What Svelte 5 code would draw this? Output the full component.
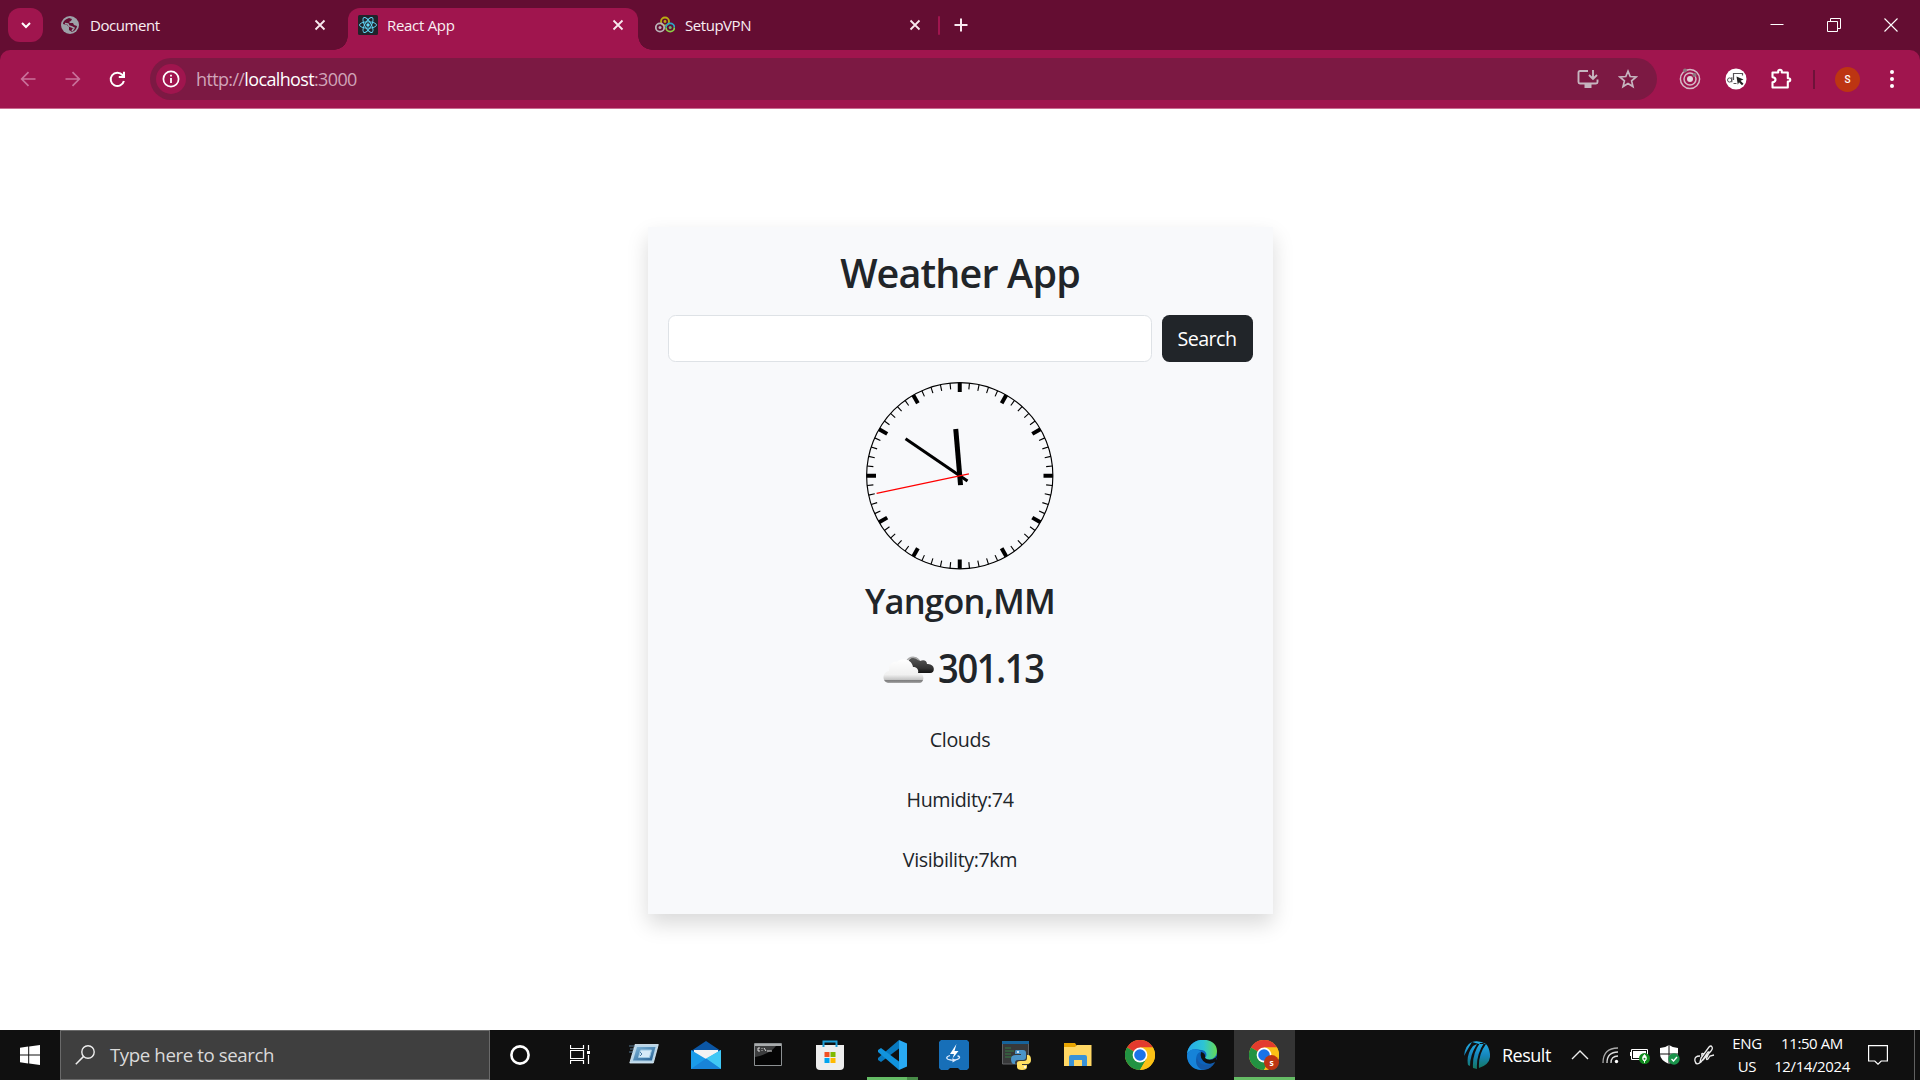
<script>
  // Clock marks: every fifth one is a thick hour mark.
  const marks = Array.from({ length: 60 }, (_, i) => ({ angle: i * 6, hour: i % 5 === 0 }));
  const tabs = [
    { title: 'Document', icon: 'globe' },
    { title: 'React App', icon: 'react', active: true },
    { title: 'SetupVPN', icon: 'vpn' }
  ];
  const apps = ['run', 'mail', 'cmd', 'store', 'code', 'bolt', 'python', 'folder', 'chrome', 'edge', 'profile'];
  const details = ['Clouds', 'Humidity:74', 'Visibility:7km'];
</script>

{#snippet chrome()}
  <circle cx="15" cy="15" r="15" fill="#fbc116" />
  <path d="M15 15 2 7.5A15 15 0 0 1 28 7.5H15z" fill="#e33b2e" />
  <path d="M2 7.5A15 15 0 0 0 15 30L21.5 18.8 15 15z" fill="#229342" />
  <path d="M15 7.5H28A15 15 0 0 1 15 30l6.5-11.2z" fill="#fbc116" />
  <circle cx="15" cy="15" r="7.4" fill="#fff" />
  <circle cx="15" cy="15" r="5.8" fill="#1a73e8" />
{/snippet}

<div class="screen">
  <div class="tabstrip">
    <div class="tab-search">
      <svg width="12" height="12" viewBox="0 0 12 12"><path d="m2 4 4 4 4-4" fill="none" stroke="#fff" stroke-width="2" /></svg>
    </div>
    {#each tabs as tab}
      <div class="tab {tab.icon}" class:active={tab.active}>
        <svg width="20" height="20" viewBox="0 0 20 20">
          {#if tab.icon === 'globe'}
            <circle cx="10" cy="10" r="9" fill="#9da1a8" />
            <path d="M9 3C6 4 3 6 3 9l4 1 2 2v3l3 2c3-1 5-4 5-6l-3-1-1-2h-3L9 7l2-1 1-2z" fill="#640d32" />
            <path d="M5 8.500l3 .5 1 2 3 1 2 1-2 3" fill="none" stroke="#9da1a8" stroke-width="1.500" />
          {:else if tab.icon === 'react'}
            <rect width="20" height="20" rx="1.500" fill="#20232a" />
            <g fill="none" stroke="#61dafb" stroke-width=".9">
              <ellipse cx="10" cy="10" rx="8.500" ry="3.200" />
              <ellipse cx="10" cy="10" rx="8.500" ry="3.200" transform="rotate(60 10 10)" />
              <ellipse cx="10" cy="10" rx="8.500" ry="3.200" transform="rotate(120 10 10)" />
            </g>
            <circle cx="10" cy="10" r="1.700" fill="#61dafb" />
          {:else}
            <g fill="none" stroke-width="1.800">
              <circle cx="10" cy="6.500" r="4" stroke="#b9ac12" />
              <path d="M11 12.500a4.200 4.200 0 0 1 8.400 0" stroke="#29a6c9" />
              <path d="M11 12.500a4.200 4.200 0 0 0 8.400 0" stroke="#8ccf45" />
              <circle cx="5" cy="12.500" r="4.200" stroke="#b9b2b8" />
            </g>
            <circle cx="10" cy="6.500" r="1.400" fill="#b9ac12" />
            <circle cx="5" cy="12.500" r="1.500" fill="#b9b2b8" />
            <circle cx="15.200" cy="12.500" r="1.500" fill="#66ba70" />
          {/if}
        </svg>
        <span class="tab-title">{tab.title}</span>
        <svg width="12" height="12" viewBox="0 0 12 12"><path d="m1.500 1.500 9 9m0-9-9 9" stroke="#f8e9ef" stroke-width="1.800" /></svg>
      </div>
    {/each}
    <span class="tab-divider"></span>
    <svg class="new-tab" width="14" height="14" viewBox="0 0 14 14"><path d="M7 .5v13M.5 7h13" stroke="#f8e9ef" stroke-width="2" /></svg>
    <div class="window-buttons">
      <svg width="14" height="14" viewBox="0 0 14 14"><path d="M.5 6.500h13" stroke="#fff" /></svg>
      <svg width="14" height="14" viewBox="0 0 14 14"><path d="M.5 3.500h10v10H.5zM3.500 3.500v-3h10v10h-3" fill="none" stroke="#fff" /></svg>
      <svg width="14" height="14" viewBox="0 0 14 14"><path d="m.5.500 13 13m0-13-13 13" stroke="#fff" stroke-width="1.100" /></svg>
    </div>
  </div>

  <div class="toolbar-back">
    <div class="toolbar">
      <svg class="back" width="16" height="16" viewBox="0 0 16 16"><path d="M15.500 8H2m6.500-6.800L1.700 8l6.800 6.800" fill="none" stroke="#c9719a" stroke-width="1.700" /></svg>
      <svg class="forward" width="16" height="16" viewBox="0 0 16 16"><path d="M.5 8H14M7.500 1.200 14.300 8l-6.800 6.800" fill="none" stroke="#c9719a" stroke-width="1.700" /></svg>
      <svg class="reload" width="17" height="17" viewBox="0 0 17 17"><path d="M14.900 10A6.700 6.700 0 1 1 13.500 4l2 2" fill="none" stroke="#fff" stroke-width="2" /><path d="M16 .8V7h-6.200V5H14V.8z" fill="#fff" /></svg>
      <div class="address">
        <span class="info">
          <svg width="18" height="18" viewBox="0 0 18 18"><circle cx="9" cy="9" r="7.600" fill="none" stroke="#fff" stroke-width="1.700" /><path d="M9 8v5M9 4.700v1.900" stroke="#fff" stroke-width="1.800" /></svg>
        </span>
        <span class="url">http://<b>localhost</b>:3000</span>
        <svg class="install" width="22" height="20" viewBox="0 0 22 20"><path d="M11 2H3q-1.500 0-1.500 1.500V13q0 1.500 1.500 1.500h16q1.500 0 1.500-1.500v-2.500M16 1v9m-4-4 4 4 4-4" fill="none" stroke="#c6b5bf" stroke-width="1.900" /><path d="M7.500 14.500h7V19h-7z" fill="#c6b5bf" /></svg>
        <svg width="20" height="20" viewBox="0 0 20 20"><path d="m10 2.200 2.200 5.300 5.900.5-4.500 3.900 1.400 5.700-5-3-5 3 1.400-5.700L1.900 8l5.900-.5z" fill="none" stroke="#c6b5bf" stroke-width="1.700" /></svg>
      </div>
      <svg class="ext" width="22" height="22" viewBox="0 0 22 22"><g fill="none" stroke="#d6b9c6" stroke-width="1.500"><circle cx="11" cy="11" r="9.600" /><circle cx="11" cy="11" r="6" /></g><circle cx="11" cy="11" r="3" fill="#e3d6dc" /><circle cx="6" cy="2.500" r="2" fill="#8d7880" /><circle cx="15.500" cy="7" r="2" fill="#8d7880" /></svg>
      <svg class="ext2" width="22" height="22" viewBox="0 0 22 22"><circle cx="11" cy="11" r="10.500" fill="#fff" /><path d="M17.500 7.500v-2h-9V12m0 3.500h3M6.800 9.300v5" fill="none" stroke="#575457" stroke-width="1.200" /><circle cx="4.600" cy="12" r="2.100" fill="none" stroke="#575457" /><path d="m11.500 8.500 7 3-3 1.200 3 3-1.500 1.500-3-3-1.200 2.500z" fill="#222" /></svg>
      <svg class="puzzle" width="22" height="22" viewBox="0 0 22 22"><path d="M2.500 4.500h5.700v-1a1.800 1.800 0 0 1 3.600 0v1h6v5.700h.8a1.600 1.600 0 0 1 0 3.300h-.8v6H2.500v-5.200c4-.8 4-4.500 0-5.200z" fill="none" stroke="#fff" stroke-width="2.100" stroke-linejoin="round" /></svg>
      <span class="divider"></span>
      <span class="avatar">S</span>
      <svg width="6" height="20" viewBox="0 0 6 20"><g fill="#fff"><circle cx="3" cy="3" r="2" /><circle cx="3" cy="10" r="2" /><circle cx="3" cy="17" r="2" /></g></svg>
    </div>
  </div>

  <main>
    <section class="card">
      <h1>Weather App</h1>
      <form>
        <input type="text" aria-label="City" />
        <button type="button">Search</button>
      </form>
      <svg class="clock" viewBox="-75 -75 150 150">
        <circle r="74.500" fill="none" stroke="#000" stroke-width=".9" />
        {#each marks as mark}
          <path d={mark.hour ? 'M0-74.500v7.500' : 'M0-74.500v5'} transform="rotate({mark.angle})" stroke="#000" stroke-width={mark.hour ? 3.2 : 0.9} />
        {/each}
        <path d="M0 7.500v-45" transform="rotate(-4.900)" stroke="#000" stroke-width="4" />
        <path d="M0 7.500v-60" transform="rotate(-55.700)" stroke="#000" stroke-width="2.400" />
        <path d="M0 7.500v-75.500" transform="rotate(258)" stroke="#f00" stroke-width=".95" />
      </svg>
      <h2>Yangon,MM</h2>
      <div class="temperature">
        <svg width="54" height="30" viewBox="0 0 54 30">
          <defs>
            <linearGradient id="white-cloud" x2="0" y2="1"><stop stop-color="#fff" /><stop offset=".65" stop-color="#f0f0f0" /><stop offset=".86" stop-color="#c4c4c4" /><stop offset=".9" stop-color="#777" /><stop offset="1" stop-color="#aaa" /></linearGradient>
            <linearGradient id="dark-cloud" x2="0" y2="1"><stop stop-color="#5a5a5a" /><stop offset=".7" stop-color="#333" /><stop offset="1" stop-color="#111" /></linearGradient>
          </defs>
          <path d="M26 9c0-8 9-9 12-3 4-2 7 0 7 3 8-1 9 9 3 9H34z" fill="url(#dark-cloud)" />
          <path d="M24 9c1-7 8-9 13-4" fill="none" stroke="#aaa" stroke-width="1.500" />
          <path d="M8 28C-1 28 0 17 7 16 6 8 12 6 15 7c4-5 15-3 16 5 4 0 6 3 5 6 7-1 7 10 1 10z" fill="url(#white-cloud)" />
        </svg>
        <span>301.13</span>
      </div>
      {#each details as text}
        <p>{text}</p>
      {/each}
    </section>
  </main>

  <footer>
    <div class="start"><svg width="20" height="20" viewBox="0 0 20 20"><path d="M0 2.700 8.200 1.600v7.900H0zM9.200 1.400 20 0v9.500H9.200zM0 10.500h8.200v7.900L0 17.300zM9.200 10.500H20V20L9.200 18.600z" fill="#fff" /></svg></div>
    <div class="search">
      <svg width="20" height="20" viewBox="0 0 20 20"><circle cx="13" cy="7" r="6.200" fill="none" stroke="#eee" stroke-width="1.400" /><path d="M8.600 11.400.8 19.300" stroke="#eee" stroke-width="1.500" /></svg>
      <span>Type here to search</span>
    </div>
    <div class="system-button"><svg width="20" height="20" viewBox="0 0 20 20"><circle cx="10" cy="10" r="8.600" fill="none" stroke="#fff" stroke-width="2.600" /></svg></div>
    <div class="system-button"><svg width="20" height="20" viewBox="0 0 20 20"><path d="M.5 0v3.500h13V0M.5 5.500h13v8H.5zM.5 19v-3.500h13V19M18.500 0v5M18.500 10v9" fill="none" stroke="#fff" stroke-width="1.200" /><path d="M17 6h3v3h-3z" fill="#fff" /></svg></div>
    <div class="apps">
      {#each apps as app}
        <div class="app {app}">
          <svg width="30" height="30" viewBox="0 0 30 30">
            {#if app === 'run'}
              <defs><linearGradient id="run-face" x2="1" y2="1"><stop stop-color="#7db4d8" /><stop offset="1" stop-color="#245f92" /></linearGradient></defs>
              <path d="M6 4.500h23.300l-5 18.500H.8z" fill="#b7d5e8" stroke="#e0f0fa" stroke-width=".8" /><path d="M8 7h18.500l-3.600 13.500H4z" fill="url(#run-face)" /><path d="M11.500 10h11l-2 7.500h-11z" fill="#d5eaf8" stroke="#9cc7e2" /><path d="m11 12 2 2-2 2" fill="none" stroke="#4b7da5" /><path d="M0 6h6M1 9h4M0 12h4" stroke="#54758c" />
            {:else if app === 'mail'}
              <path d="M0 11 15 1l15 10-15 9z" fill="#0b56a4" /><path d="M3 10h24v9H3z" fill="#f3f3f3" /><path d="M0 10l15 9 15-9v19H0z" fill="#1a9be9" /><path d="m15 18.500 15-8.500v19z" fill="#40c8f5" /><path d="M0 29 15 18.500 30 29z" fill="#1883d8" />
            {:else if app === 'cmd'}
              <path d="M1.500 3.500h27v22h-27z" fill="#050505" stroke="#8c9092" /><path d="M2 4h26v2H2z" fill="#a9acad" /><path d="M2 6h21Q17 14 2 17z" fill="#3c3d3e" /><path d="M7 8H5v3h2M9 8v.8M9 10v.8M11 8l2 3M14 11h5" stroke="#ddd" stroke-width="1" fill="none" />
            {:else if app === 'store'}
              <path d="M8.500 7V1.500h13V7" fill="none" stroke="#1e9fd8" stroke-width="2" /><path d="M1 5h28v21q0 4-4 4H5q-4 0-4-4z" fill="#eee" /><path d="M8.500 7V5m13 2V5" stroke="#1e9fd8" stroke-width="2" /><path d="M9.500 12h5v5h-5z" fill="#f25022" /><path d="M15.500 12h5v5h-5z" fill="#7fba00" /><path d="M9.500 18h5v5h-5z" fill="#00a4ef" /><path d="M15.500 18h5v5h-5z" fill="#ffb900" />
            {:else if app === 'code'}
              <path d="m22 0 8 3.500v23L22 30z" fill="#29a9f2" /><path d="M22 0v8.500L4 22l-3-2 0-2z" fill="#0879bf" /><path d="M22 30v-8.500L4 8l-3 2v2z" fill="#1193dd" />
            {:else if app === 'bolt'}
              <path d="M2 0h26l2 2v26l-2 2h-7l-2-2h-8l-2 2H2l-2-2V2z" fill="#176fb8" /><path d="m17.500 4-6.500 10h4l-1.500 4.500L19.500 11h-4z" fill="#fff" /><path d="M11 15.500c-5 1.500-4 4 1 4.500 5 .300 9-1 8.500-3q-.5-1-2-1" stroke="#dceafd" stroke-width="1.300" fill="none" /><path d="M13.500 18v4.500l3.500-2z" fill="#dceafd" />
            {:else if app === 'python'}
              <path d="M1.500 2h26v22h-26z" fill="#38393a" stroke="#626466" /><path d="M1 1h27v3H1z" fill="#16639b" /><path d="M4 8h6M4 11h9M4 14h6M4 17h7" stroke="#357e44" />
              <path d="M15 10h7q3 0 3 3v4q0 3-3 3h-5q-3 0-3 3v1h-1q-3 0-3-5 0-4 5-4h5v-1h-6v-2q0-2 1-2z" fill="#4b94c8" /><path d="M26 15h1q3 0 3 5 0 4-4 4h-5v1h5v2q0 3-5 3t-5-3v-4q0-2 3-2h4q3 0 3-3z" fill="#ffdf63" /><circle cx="17" cy="12" r="1" fill="#fff" /><circle cx="24" cy="27" r="1" fill="#fff" />
            {:else if app === 'folder'}
              <path d="M1 3h11l2 3h13v6H1z" fill="#e8a400" /><path d="M1 7h11l2-2h14.500v21H1z" fill="#ffd764" /><path d="M6 26V17q0-2 2-2h14q2 0 2 2v9h-5v-6h-8v6z" fill="#3992d8" />
            {:else if app === 'edge'}
              <defs><linearGradient id="edge-top"><stop stop-color="#26a9eb" /><stop offset=".55" stop-color="#2dc4d5" /><stop offset="1" stop-color="#65da55" /></linearGradient></defs>
              <circle cx="15" cy="15" r="15" fill="#0c63bb" /><path d="M0 14C2-5 30-4 30 11c0 9-10 10-12 7 3-3 1-8-4-8C7 8 2 10 0 14z" fill="url(#edge-top)" /><path d="M0 15c3-8 11-6 14-3-6 0-8 14 4 18C6 31 0 24 0 15z" fill="#1683d8" /><path d="M14 12q5 1 4 6 3 3 9 1l3 1-1 2q-5 3-10 1-7-4-5-11z" fill="#101010" /><path d="M28 21.500q-5 10-14 8-7-5-4-12 1 7 9 7.500 5 0 9-3.500z" fill="#1459a8" /><path d="m30 17-2 4.500-2 1V19q3-1 4-3z" fill="#101010" />
            {:else}
              {@render chrome()}
              {#if app === 'profile'}<circle cx="22.500" cy="22.500" r="7.500" fill="#bd3512" /><text x="22.500" y="25.500" font-size="8.500" font-weight="700" text-anchor="middle" fill="#fff">s</text>{/if}
            {/if}
          </svg>
        </div>
      {/each}
    </div>
    <div class="tray">
      <svg class="ball" width="26" height="28" viewBox="0 0 26 28"><defs><linearGradient id="ball" x2="0" y2="1"><stop stop-color="#24b1e8" /><stop offset=".5" stop-color="#1686bd" /><stop offset="1" stop-color="#14775e" /></linearGradient></defs><path d="M8 1Q1 4 0 15q5-9 8-14zM9 5Q2 14 4 24l2 1Q6 14 13 3zM16 2Q8 13 9 27l4 1Q12 14 20 2zM8 1q7-2 14 2l-7 0zM22 3Q14 14 15 27q12-4 11-14-1-7-4-10z" fill="url(#ball)" /></svg>
      <span class="result">Result</span>
      <svg class="chevron" width="18" height="10" viewBox="0 0 18 10"><path d="m1 9 8-8 8 8" fill="none" stroke="#eee" stroke-width="1.400" /></svg>
      <svg class="wifi" width="17" height="17" viewBox="0 0 17 17"><g fill="none" stroke="#aaa" stroke-width="1.300"><path d="M1 16Q1 1 16 1" /><path d="M5 16Q5 5 16 5M9 16q0-7 7-7" stroke="#ddd" /></g><circle cx="14.500" cy="14.500" r="1.700" fill="#fff" /></svg>
      <svg class="battery" width="20" height="17" viewBox="0 0 20 17"><path d="M1.500 2.500h16v10h-16z" fill="none" stroke="#fff" /><path d="M3 4h13v7H3zM0 5h1v4H0z" fill="#fff" /><circle cx="14.500" cy="11.500" r="5.500" fill="#118b1e" /><path d="M14.500 7.500q4 4 0 7-4-3 0-7zM14.500 11v5" fill="#fff" stroke="#fff" stroke-width=".8" /><circle cx="14.500" cy="11.800" r="1" fill="#118b1e" /></svg>
      <svg class="shield" width="20" height="20" viewBox="0 0 20 20"><path d="M9 0q4 3 9 3v6q0 6-9 10-9-4-9-10V3q5 0 9-3z" fill="#fff" /><path d="M9 0v19M0 9h18" stroke="#101010" /><circle cx="14" cy="14" r="5.700" fill="#1a934b" /><path d="m11.500 14 2 2 3.500-4" fill="none" stroke="#fff" stroke-width="1.400" /></svg>
      <svg class="pen" width="21" height="20" viewBox="0 0 21 20"><path d="M7 13 15 2q2-2 3 0t-1 4L9 15l-3 2zM10 9Q7 7 8 11m-2 0q-6 0-5 5 1 5 6 1l7-10q2-1 0 3-3 6 0 4l2-3 4-1" fill="none" stroke="#eee" stroke-width="1.300" /></svg>
      <div class="language"><span>ENG</span><span>US</span></div>
      <div class="datetime"><span>11:50 AM</span><span>12/14/2024</span></div>
      <svg class="notice" width="20" height="20" viewBox="0 0 20 20"><path d="M.6.600h18.800v15.400h-6.200L10 19.200 6.800 16H.6z" fill="none" stroke="#fff" stroke-width="1.200" /></svg>
      <span class="desktop-peek"></span>
    </div>
  </footer>
</div>

<style>
  :global(body) { margin: 0; overflow: hidden; }
  .screen { width: 1920px; height: 1080px; display: flex; flex-direction: column; font-family: "Open Sans", "Noto Sans", sans-serif; color: #212529; background: #fff; }
  svg { display: block; flex: none; }
  .tabstrip, .toolbar, .address, footer, .search, .apps, .tray, .window-buttons { display: flex; align-items: center; box-sizing: border-box; }
  .tabstrip { height: 50px; background: #640d32; padding-left: 8px; }
  .tab-search { width: 35px; height: 34px; border-radius: 12px; background: #a0154e; display: grid; place-items: center; margin-right: 8px; }
  .tab { position: relative; box-sizing: border-box; height: 42px; margin-top: 8px; padding-bottom: 8px; width: 297px; display: flex; align-items: center; padding-left: 9px; color: #f9edf2; }
  .tab.active { width: 290px; background: #a0154e; border-radius: 12px 12px 0 0; padding-left: 10px; }
  .tab.active::before, .tab.active::after { content: ""; position: absolute; bottom: 0; width: 14px; height: 14px; }
  .tab.active::before { right: 100%; background: radial-gradient(circle at 0 0, transparent 13.500px, #a0154e 14px); }
  .tab.active::after { left: 100%; background: radial-gradient(circle at 100% 0, transparent 13.500px, #a0154e 14px); }
  .tab.vpn { padding-left: 17px; width: 300px; }
  .tab-title { font-size: 15px; width: 224px; margin-left: 10px; white-space: nowrap; letter-spacing: -.45px; }
  .active .tab-title { margin-left: 9px; width: 225px; letter-spacing: -.3px; }
  .tab-divider { width: 2px; height: 19px; background: #a0154e; border-radius: 1px; margin-right: 14px; }
  .window-buttons { margin-left: auto; gap: 43px; padding-right: 22px; }
  .toolbar-back { background: #640d32; height: 59px; flex: none; }
  .toolbar { height: 59px; background: #a0154e; border-bottom: 1px solid #ca6c91; border-radius: 10px 10px 0 0; padding-left: 20px; padding-right: 25px; }
  .back { margin-right: 29px; }
  .forward { margin-right: 28px; }
  .address { width: 1507px; height: 42px; margin-left: 24px; background: #7c1943; border-radius: 21px; padding: 0 19px 0 6px; }
  .info { width: 30px; height: 30px; border-radius: 50%; display: grid; place-items: center; background: #a0154e; }
  .url { margin-left: 10px; font-size: 18px; color: #d0a4b8; letter-spacing: -.64px; }
  .url b { font-weight: 400; color: #fff; }
  .install { margin-left: auto; margin-right: 19px; }
  .ext { margin-left: 22px; }
  .ext2 { margin-left: 24px; }
  .puzzle { margin-left: 23px; }
  .divider { width: 2px; height: 19px; background: #6e1239; margin-left: 21px; }
  .avatar { width: 25px; height: 25px; border-radius: 50%; background: #bd3512; color: #fff; font: 500 10px/25px Roboto, sans-serif; text-align: center; margin: 0 29px 0 20px; }
  main { height: 921px; box-sizing: border-box; padding-top: 118px; }
  .card { box-sizing: border-box; width: 625px; height: 687px; margin: 0 auto; background: #f8f9fb; padding: 20px; box-shadow: 0 10px 20px rgba(0,0,0,.15); display: flex; flex-direction: column; align-items: center; }
  h1, h2, p { margin: 0; white-space: nowrap; }
  h1 { font-size: 39.500px; line-height: 48px; font-weight: 580; padding-top: 2px; margin-bottom: 18px; letter-spacing: -.85px; }
  form { display: flex; gap: 10px; width: 100%; height: 47px; }
  input, button { box-sizing: border-box; border-radius: 7.500px; height: 47px; }
  input { flex: 1; min-width: 0; border: 1px solid #dee2e6; background: #fff; }
  button { width: 91px; border: 0; padding: 1px 0 0; background: #212529; color: #fff; font-family: inherit; font-size: 19.700px; line-height: 46px; letter-spacing: -.55px; }
  .clock { width: 187.500px; height: 187.500px; margin-top: 20px; }
  h2 { font-size: 34.500px; line-height: 42px; font-weight: 580; margin-top: 10px; letter-spacing: -.8px; }
  .temperature { display: flex; align-items: center; height: 48px; margin: 22px 0 33px 5px; font-size: 39.500px; font-weight: 600; gap: 2px; }
  .temperature svg { margin-top: 4px; }
  .temperature span { transform: scaleX(.92); transform-origin: left; margin-right: -9px; letter-spacing: -1.500px; }
  p { font-size: 19.700px; line-height: 30px; margin: 0 0 30px; letter-spacing: -.4px; }
  footer { width: 1920px; height: 50px; background: #101010; color: #fff; }
  .start { width: 60px; display: grid; place-items: center; }
  .search { width: 430px; height: 50px; background: #3f3f3f; border: 1px solid #6a6a6a; padding-left: 14px; gap: 15px; font-size: 18.700px; color: #dadada; }
  .search span { white-space: nowrap; padding-bottom: 2px; letter-spacing: -.42px; }
  .system-button { width: 60px; display: grid; place-items: center; }
  .apps { gap: 1px; margin-left: 3px; }
  .app { width: 61px; height: 50px; display: grid; place-items: center; box-sizing: border-box; }
  .app.code { background: linear-gradient(90deg, transparent 6px, #65bc65 6px 46px, #478b47 46px 57px, transparent 57px) bottom / 100% 3px no-repeat; }
  .app.profile { background: #343434; box-shadow: inset 0 -3px #65bc65; margin-left: 1px; }
  .app.profile svg { margin-right: 2px; }
  .tray { margin-left: auto; height: 50px; width: 456px; font-size: 15px; }
  .result { font-size: 18px; margin-left: 12px; width: 69px; letter-spacing: -.5px; }
  .chevron { margin-right: 13px; }
  .wifi { margin-right: 11px; }
  .battery { margin-right: 10px; }
  .shield { margin-right: 14px; }
  .language, .datetime { display: flex; flex-direction: column; align-items: center; white-space: nowrap; line-height: 23px; font-size: 15px; letter-spacing: -.4px; }
  .language { width: 34px; margin-left: 15px; }
  .datetime { width: 78px; margin-left: 9px; }
  .notice { margin-left: 17px; }
  .desktop-peek { width: 1px; height: 50px; background: #606060; margin-left: auto; margin-right: 5px; }
</style>
